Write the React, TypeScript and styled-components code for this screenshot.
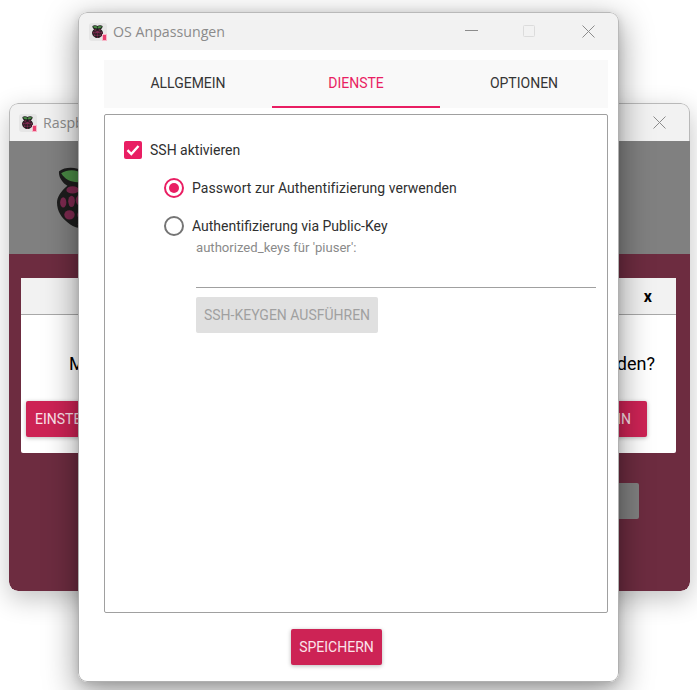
import React from "react";
import styled, { createGlobalStyle } from "styled-components";

const Global = createGlobalStyle`
  html, body { margin: 0; padding: 0; background: #fff; }
  body { font-family: Roboto, "Liberation Sans", sans-serif; overflow: hidden; }
`;

const Desktop = styled.div`
  position: relative;
  width: 697px;
  height: 690px;
  overflow: hidden;
  background: #fff;
`;

const Window = styled.div<{ $x: number; $y: number; $w: number; $h: number }>`
  position: absolute;
  left: ${(p) => p.$x}px;
  top: ${(p) => p.$y}px;
  width: ${(p) => p.$w}px;
  height: ${(p) => p.$h}px;
  box-sizing: border-box;
  display: flex;
  flex-direction: column;
  border-radius: 9px;
  overflow: hidden;
`;

const WindowShadow = styled.div<{ $x: number; $y: number; $w: number; $h: number; $strong?: boolean }>`
  position: absolute;
  left: ${(p) => p.$x}px;
  top: ${(p) => p.$y}px;
  width: ${(p) => p.$w}px;
  height: ${(p) => p.$h}px;
  border-radius: 9px;
  box-shadow: ${(p) =>
    p.$strong
      ? "0 10px 32px 2px rgba(0,0,0,0.38), 0 2px 8px rgba(0,0,0,0.12)"
      : "0 8px 26px rgba(0,0,0,0.24)"};
`;

const TitleBar = styled.div<{ $h: number; $pad: number; $gap: number }>`
  flex: 0 0 ${(p) => p.$h}px;
  display: flex;
  align-items: center;
  gap: ${(p) => p.$gap}px;
  padding-left: ${(p) => p.$pad}px;
  background: #f2f2f2;
  border: 1px solid #b9b9b9;
  border-bottom: none;
  border-radius: 9px 9px 0 0;
  box-sizing: border-box;
`;

const TitleText = styled.span`
  font-family: "Open Sans", "Noto Sans", sans-serif;
  font-size: 14.2px;
  color: #8b8b8b;
  flex: 1;
  white-space: nowrap;
`;

const AppIconTile = styled.span`
  position: relative;
  width: 18px;
  height: 18px;
  flex: 0 0 18px;
  border-radius: 3px;
  background: #e6e6e6;
  display: block;
`;

const Controls = styled.div`
  display: flex;
  align-items: center;
  height: 100%;
`;

const ControlBtn = styled.span<{ $w: number; $lift?: boolean }>`
  width: ${(p) => p.$w}px;
  height: 100%;
  display: flex;
  align-items: center;
  justify-content: center;
  padding-bottom: ${(p) => (p.$lift ? 2 : 0)}px;
  box-sizing: border-box;
`;

/* ---- back window ---- */
const Hero = styled.div`
  flex: 0 0 113px;
  background: #808080;
  display: flex;
  padding: 25px 0 0 48px;
  box-sizing: border-box;
`;

const BackBody = styled.div`
  flex: 1;
  background: #6d2c40;
  border-radius: 0 0 9px 9px;
  display: flex;
  flex-direction: column;
  padding: 24px 14px 0 12px;
`;

const Dialog = styled.div`
  height: 175px;
  flex: 0 0 175px;
  background: #fff;
  border-radius: 2px;
  display: flex;
  flex-direction: column;
`;

const DialogHeader = styled.div`
  flex: 0 0 36px;
  background: #f2f2f2;
  border-bottom: 1px solid #a8a8a8;
  display: flex;
  justify-content: flex-end;
  align-items: center;
  padding-right: 24px;
  font-size: 16px;
  font-weight: 700;
  color: #000;
`;

const DialogText = styled.div`
  padding: 0 21px 0 48px;
  font-size: 18px;
  color: #000;
  margin-top: 38px;
  line-height: 21px;
  white-space: normal;
  text-align: justify;
  text-align-last: justify;
`;

const DialogButtons = styled.div`
  display: flex;
  justify-content: space-between;
  margin-top: 27px;
  padding: 0 29px 0 5px;
`;

const Button = styled.div<{ $muted?: boolean }>`
  height: 36px;
  box-sizing: border-box;
  padding: 0 9px;
  display: inline-flex;
  align-items: center;
  justify-content: center;
  border-radius: 2px;
  font-size: 14px;
  white-space: nowrap;
  background: ${(p) => (p.$muted ? "#e0e0e0" : "#cd2355")};
  color: ${(p) => (p.$muted ? "#a0a0a0" : "#fbe3ea")};
  box-shadow: ${(p) => (p.$muted ? "none" : "0 1px 4px rgba(0,0,0,0.28)")};
`;

const NoButton = styled(Button)`
  padding: 0 16px 0 60px;
`;

const BackActions = styled.div`
  display: flex;
  justify-content: flex-end;
  margin-top: 30px;
  padding-right: 37px;
`;

const GreyButton = styled.div`
  width: 100px;
  height: 36px;
  border-radius: 2px;
  background: #808080;
`;

/* ---- front window ---- */
const FrontBody = styled.div`
  flex: 1;
  min-height: 0;
  background: #fff;
  border: 1px solid #b0b0b0;
  border-top: none;
  border-radius: 0 0 9px 9px;
  padding: 10px 10px 0 25px;
  display: flex;
  flex-direction: column;
  box-sizing: border-box;
`;

const Tabs = styled.div`
  flex: 0 0 48px;
  background: #f9f9f9;
  display: grid;
  grid-template-columns: repeat(3, 168px);
`;

const Tab = styled.div<{ $active?: boolean }>`
  display: flex;
  align-items: center;
  justify-content: center;
  font-size: 14px;
  color: ${(p) => (p.$active ? "#e91e63" : "#353535")};
  border-bottom: 2px solid ${(p) => (p.$active ? "#e91e63" : "transparent")};
  box-sizing: border-box;
`;

const Panel = styled.div`
  margin-top: 6px;
  flex: 0 0 499px;
  border: 1px solid #a0a0a0;
  border-radius: 2px;
  box-sizing: border-box;
  padding: 26px 11px 0 19px;
  display: flex;
  flex-direction: column;
`;

const CheckRow = styled.div`
  display: flex;
  align-items: center;
  gap: 8px;
  height: 18px;
  font-size: 14px;
  color: #2f2f2f;
`;

const CheckBox = styled.span`
  width: 18px;
  height: 18px;
  border-radius: 2px;
  background: #e91e63;
  display: flex;
  align-items: center;
  justify-content: center;
`;

const RadioRow = styled.div<{ $gap: number; $track?: number }>`
  display: flex;
  align-items: center;
  gap: 8px;
  height: 20px;
  margin: ${(p) => p.$gap}px 0 0 40px;
  font-size: 14px;
  letter-spacing: ${(p) => p.$track ?? 0}px;
  color: #2f2f2f;
`;

const Radio = styled.span<{ $on?: boolean }>`
  width: 20px;
  height: 20px;
  box-sizing: border-box;
  border-radius: 50%;
  border: 2px solid ${(p) => (p.$on ? "#e91e63" : "#757575")};
  display: flex;
  align-items: center;
  justify-content: center;
  &::after {
    content: "";
    display: ${(p) => (p.$on ? "block" : "none")};
    width: 10px;
    height: 10px;
    border-radius: 50%;
    background: #e91e63;
  }
`;

const KeyBlock = styled.div`
  margin-left: 72px;
  display: flex;
  flex-direction: column;
  align-items: flex-start;
`;

const KeyLabel = styled.div`
  margin-top: 3px;
  font-size: 13.12px;
  line-height: 18px;
  color: #8a8a8a;
`;

const KeyField = styled.div`
  align-self: stretch;
  height: 30px;
  border-bottom: 1px solid #a0a0a0;
`;

const KeyButton = styled(Button)`
  margin-top: 9px;
  width: 182px;
  padding: 0;
`;

const SaveRow = styled.div`
  display: flex;
  justify-content: center;
  margin-top: 16px;
  padding-right: 39px;
`;

const SaveButton = styled(Button)`
  width: 91px;
  padding: 0;
`;

const Raspberry: React.FC<{ size: number }> = ({ size }) => (
  <svg width={size} height={size * 1.2} viewBox="0 0 50 60" style={{ display: "block" }}>
    <path
      d="M25 5C20 1 8 0 2 5c-1 6 4 12 8 14C4 24 0 30 0 35c0 9 5 15 10 19 4 4 10 6 15 6s11-2 15-6c5-4 10-10 10-19 0-5-4-11-10-16 4-2 9-8 8-14C42 0 30 1 25 5Z"
      fill="#1d1d1d"
    />
    <path d="M24 15C17 17 8 14 4 7c6-4 16-4 20 1Z" fill="#4a8a45" />
    <path d="M26 15c7 2 16-1 20-8-6-4-16-4-20 1Z" fill="#4a8a45" />
    <g fill="#7e2a50">
      <ellipse cx="15" cy="23" rx="6" ry="3.5" />
      <ellipse cx="35" cy="23" rx="6" ry="3.5" />
      <ellipse cx="25" cy="33" rx="7" ry="6.5" />
      <ellipse cx="14" cy="34" rx="3.2" ry="5.5" />
      <ellipse cx="6" cy="35" rx="3" ry="5" />
      <ellipse cx="36" cy="34" rx="3.2" ry="5.5" />
      <ellipse cx="44" cy="35" rx="3" ry="5" />
      <ellipse cx="12" cy="47" rx="5" ry="4.5" />
      <ellipse cx="38" cy="47" rx="5" ry="4.5" />
      <ellipse cx="25" cy="47" rx="5.5" ry="5" />
      <ellipse cx="25" cy="56" rx="5" ry="2.5" />
    </g>
  </svg>
);

const AppIconBerry = styled.span`
  position: absolute;
  left: 3px;
  top: 2px;
`;

const AppIconBadge = styled.span`
  position: absolute;
  right: 0;
  bottom: 0;
  width: 5px;
  height: 7px;
  background: #e8416f;
  border: 1px solid #f6b8c9;
  box-sizing: border-box;
`;

const AppIcon = () => (
  <AppIconTile>
    <AppIconBerry>
      <Raspberry size={11} />
    </AppIconBerry>
    <AppIconBadge />
  </AppIconTile>
);

const CloseIcon = () => (
  <svg width="13" height="13" viewBox="0 0 13 13">
    <path d="M.5.5l12 12M12.5.5l-12 12" stroke="#8c8c8c" strokeWidth="1" fill="none" />
  </svg>
);

export default function App() {
  return (
    <Desktop>
      <Global />
      <WindowShadow $x={9} $y={103} $w={681} $h={488} />
      <Window $x={9} $y={103} $w={681} $h={488}>
        <TitleBar $h={38} $pad={9} $gap={6}>
          <AppIcon />
          <TitleText>Raspberry Pi Imager</TitleText>
          <Controls>
            <ControlBtn $w={60}>
              <CloseIcon />
            </ControlBtn>
          </Controls>
        </TitleBar>
        <Hero>
          <Raspberry size={52} />
        </Hero>
        <BackBody>
          <Dialog>
            <DialogHeader>x</DialogHeader>
            <DialogText>Möchten Sie die vorher festgelegten OS-Modifizierungen anwenden?</DialogText>
            <DialogButtons>
              <Button>EINSTELLUNGEN BEARBEITEN</Button>
              <NoButton>NEIN</NoButton>
            </DialogButtons>
          </Dialog>
          <BackActions>
            <GreyButton />
          </BackActions>
        </BackBody>
      </Window>

      <WindowShadow $x={78} $y={12} $w={541} $h={670} $strong />
      <Window $x={78} $y={12} $w={541} $h={670}>
        <TitleBar $h={38} $pad={10} $gap={6}>
          <AppIcon />
          <TitleText>OS Anpassungen</TitleText>
          <Controls>
            <ControlBtn $w={58} $lift>
              <svg width="13" height="1" viewBox="0 0 13 1">
                <path d="M0 .5h13" stroke="#8c8c8c" strokeWidth="1" />
              </svg>
            </ControlBtn>
            <ControlBtn $w={58} $lift>
              <svg width="12" height="12" viewBox="0 0 12 12">
                <rect x=".5" y=".5" width="11" height="11" rx="1" fill="none" stroke="#dcdcdc" />
              </svg>
            </ControlBtn>
            <ControlBtn $w={60}>
              <CloseIcon />
            </ControlBtn>
          </Controls>
        </TitleBar>
        <FrontBody>
          <Tabs>
            <Tab>ALLGEMEIN</Tab>
            <Tab $active>DIENSTE</Tab>
            <Tab>OPTIONEN</Tab>
          </Tabs>
          <Panel>
            <CheckRow>
              <CheckBox>
                <svg width="14" height="12" viewBox="0 0 14 12">
                  <path d="M1.5 6.2l3.8 3.8 7.2-8" stroke="#fff" strokeWidth="2.4" fill="none" />
                </svg>
              </CheckBox>
              SSH aktivieren
            </CheckRow>
            <RadioRow $gap={19} $track={0.05}>
              <Radio $on />
              Passwort zur Authentifizierung verwenden
            </RadioRow>
            <RadioRow $gap={18}>
              <Radio />
              Authentifizierung via Public-Key
            </RadioRow>
            <KeyBlock>
              <KeyLabel>authorized_keys für 'piuser':</KeyLabel>
              <KeyField />
              <KeyButton $muted>SSH-KEYGEN AUSFÜHREN</KeyButton>
            </KeyBlock>
          </Panel>
          <SaveRow>
            <SaveButton>SPEICHERN</SaveButton>
          </SaveRow>
        </FrontBody>
      </Window>
    </Desktop>
  );
}
